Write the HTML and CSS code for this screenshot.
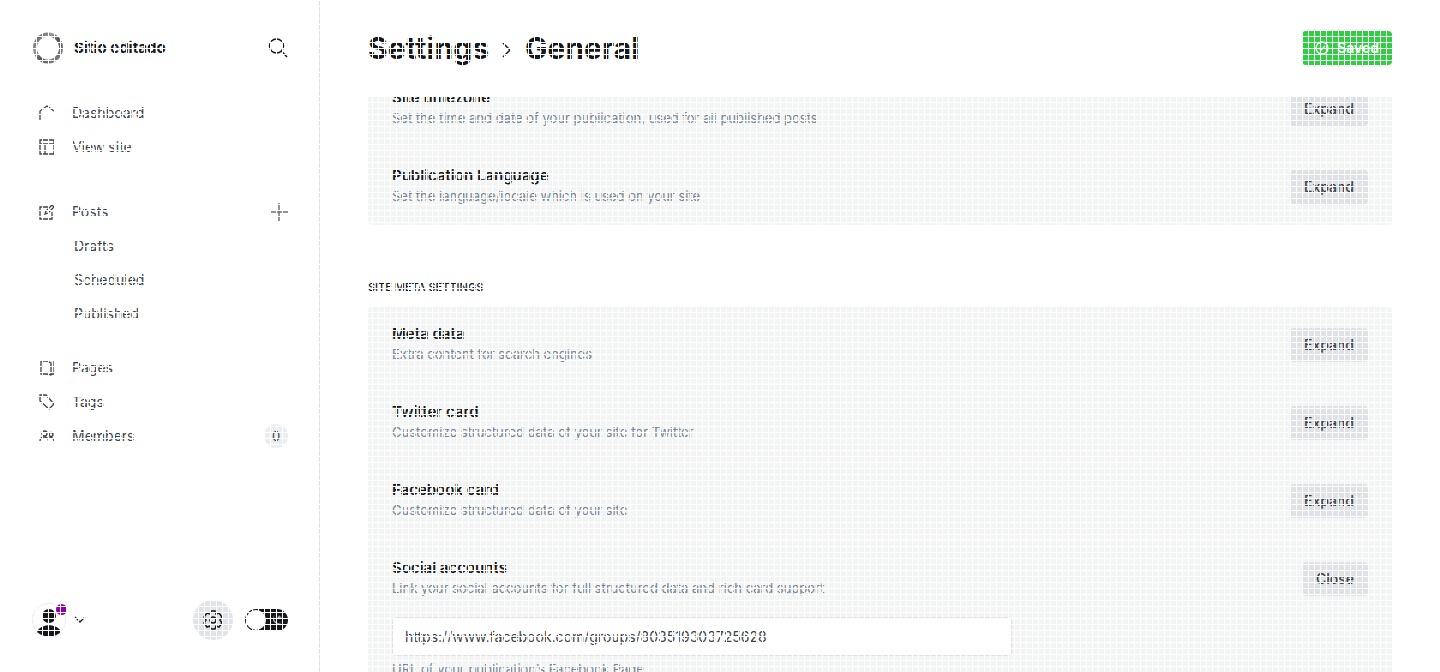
FILE: index.html
```html
<!DOCTYPE html>
<html lang="en">
<head>
<meta charset="utf-8">
<title>Settings - General</title>
<link rel="stylesheet" href="styles.css">
</head>
<body>
<div class="app">
  <nav class="sidebar" aria-label="Main">
    <header class="brand">
      <svg class="brand-logo" viewBox="0 0 32 32" aria-hidden="true"><defs><linearGradient id="ring" x1="0" y1="0" x2="1" y2="1"><stop offset="0" stop-color="#555"/><stop offset=".3" stop-color="#999"/><stop offset=".55" stop-color="#555"/><stop offset="1" stop-color="#888"/></linearGradient></defs><ellipse cx="16" cy="16" rx="13" ry="13.500" fill="none" stroke="url(#ring)" stroke-width="4"/></svg>
      <span class="brand-name">Sitio editado</span>
      <button class="icon-button" type="button" aria-label="Search"><svg class="search-icon" viewBox="0 0 20 20"><circle cx="8.500" cy="8" r="7"/><path d="M13.500 13l5.500 6"/></svg></button>
    </header>
    <ul class="nav-list">
      <li><a class="nav-item" href="#"><svg class="nav-icon" viewBox="0 0 16 16"><path d="M1 15V6l7-5 7 5"/></svg>Dashboard</a></li>
      <li><a class="nav-item" href="#"><svg class="nav-icon" viewBox="0 0 16 16"><path d="M1 1h14v14H1zM1 5h14M6 5v10"/></svg>View site</a></li>
    </ul>
    <ul class="nav-list nav-posts">
      <li class="nav-row"><a class="nav-item" href="#"><svg class="nav-icon" viewBox="0 0 16 16"><path d="M9 3H1v12h12V8M6 10l1-3 6-6 2 2-6 6z"/></svg>Posts</a><button class="icon-button" type="button" aria-label="New post"><svg class="plus-icon" viewBox="0 0 18 18"><path d="M9 0v18M0 9h18"/></svg></button></li>
      <li><a class="nav-item nav-sub" href="#">Drafts</a></li>
      <li><a class="nav-item nav-sub" href="#">Scheduled</a></li>
      <li><a class="nav-item nav-sub" href="#">Published</a></li>
    </ul>
    <ul class="nav-list nav-manage">
      <li><a class="nav-item" href="#"><svg class="nav-icon" viewBox="0 0 16 16"><path d="M2 1h6l4 2v12l-4-1H2zM15 1v13h-3"/></svg>Pages</a></li>
      <li><a class="nav-item" href="#"><svg class="nav-icon" viewBox="0 0 16 16"><path d="M1 1h6l8 9-5 5-9-8z"/></svg>Tags</a></li>
      <li class="nav-row"><a class="nav-item" href="#"><svg class="nav-icon" viewBox="0 0 16 16"><circle cx="5.500" cy="5.500" r="2.500"/><circle cx="12" cy="6.500" r="2"/><path d="M1 13c0-3 2-4 4.500-4s4 2 4 4M10 10c3-1 5 0 5 3"/></svg>Members</a><span class="count">0</span></li>
    </ul>
    <footer class="sidebar-footer">
      <button class="user-menu" type="button" aria-label="Account menu"><span class="avatar"><svg class="avatar-icon" viewBox="0 0 34 34"><circle cx="17" cy="17" r="16.500" fill="#fff" stroke="#e5e9ed"/><circle cx="17" cy="13" r="7"/><path d="M5 29c3-9 21-9 24 0-7 6-17 6-24 0z"/></svg><span class="notice"></span></span><svg class="chevron" viewBox="0 0 12 8"><path d="M1 1l5 5 5-5"/></svg></button>
      <a class="settings-link" href="#" aria-label="Settings"><svg class="gear-icon" viewBox="0 0 20 20"><path d="M8 1h4l1 3 3-1 3 4-2 3 2 3-3 4-3-1-1 3H8l-1-3-3 1-3-4 2-3-2-3 3-4 3 1z"/><circle cx="10" cy="10" r="3"/></svg></a>
      <label class="switch"><input class="switch-input" type="checkbox" aria-label="Night mode"><span class="switch-knob"></span><svg class="moon" viewBox="0 0 12 12"><path d="M4 1a5 5 0 1 0 7 7A5 5 0 0 1 4 1zM8 1l1 1.500 2 .5-2 1-1 1.500-1-1.500-1-1 1.500-.5z"/></svg></label>
    </footer>
  </nav>
  <main class="main">
    <header class="page-header">
      <h1 class="page-title"><a class="title-link" href="#">Settings</a><svg class="title-chevron" viewBox="0 0 10 16"><path d="M1 1l7 7-7 7"/></svg>General</h1>
      <button class="saved" type="button"><svg class="saved-icon" viewBox="0 0 14 14"><circle cx="7" cy="7" r="6"/><path d="M4 7l2 2 4-4"/></svg>Saved</button>
    </header>
    <div class="viewport">
      <section class="panel panel-scrolled" aria-label="Publication info">
        <div class="row"><div><h3 class="row-title">Site timezone</h3><p class="row-text">Set the time and date of your publication, used for all published posts</p></div><button class="button" type="button">Expand</button></div>
        <div class="row"><div><h3 class="row-title">Publication Language</h3><p class="row-text">Set the language/locale which is used on your site</p></div><button class="button" type="button">Expand</button></div>
      </section>
      <h2 class="section-title">Site meta settings</h2>
      <section class="panel">
        <div class="row"><div><h3 class="row-title">Meta data</h3><p class="row-text">Extra content for search engines</p></div><button class="button" type="button">Expand</button></div>
        <div class="row"><div><h3 class="row-title">Twitter card</h3><p class="row-text">Customize structured data of your site for Twitter</p></div><button class="button" type="button">Expand</button></div>
        <div class="row"><div><h3 class="row-title">Facebook card</h3><p class="row-text">Customize structured data of your site</p></div><button class="button" type="button">Expand</button></div>
        <div class="row"><div><h3 class="row-title">Social accounts</h3><p class="row-text">Link your social accounts for full structured data and rich card support</p></div><button class="button" type="button">Close</button></div>
        <div class="field"><input class="text-input" id="facebook" type="url" value="https://www.facebook.com/groups/803519303725628"><label class="field-label" for="facebook">URL of your publication’s Facebook Page</label></div>
      </section>
    </div>
  </main>
</div>
</body>
</html>
```
FILE: styles.css
```css
* { box-sizing: border-box; }
body { margin: 0; font-family: Inter, "Open Sans", sans-serif; font-size: 14px; line-height: 20px; color: #15171a; background: #fff; }
/* Fine white mesh drawn over the whole page */
body::after {
  content: ""; position: fixed; inset: 0; pointer-events: none;
  background:
    repeating-linear-gradient(to right, #fff 0 1px, transparent 1px 6px),
    repeating-linear-gradient(to bottom, #fff 0 1px, transparent 1px 6px);
}
h1, h2, h3, p, ul { margin: 0; padding: 0; }
a { color: inherit; text-decoration: none; }
button { font: inherit; color: inherit; border: 0; cursor: pointer; }
svg { display: block; flex: none; fill: none; stroke: currentColor; }
.app { display: flex; height: 100vh; overflow: hidden; }
.sidebar { flex: none; width: 320px; display: flex; flex-direction: column; padding: 32px 31px 32px 32px; border-right: 1px solid #dfe1e3; }
.brand { display: flex; align-items: center; height: 32px; margin-bottom: 32px; }
.brand-logo { width: 32px; height: 32px; }
.brand-name { flex: 1; margin-left: 10px; font-size: 15px; font-weight: 700; }
.icon-button { padding: 0; background: none; }
.search-icon { width: 20px; height: 20px; stroke-width: 1.500; }
.plus-icon { width: 18px; height: 18px; color: #6b7178; stroke-width: 1.500; }
.nav-list { list-style: none; color: #394047; }
.nav-posts { margin-top: 31px; }
.nav-manage { margin-top: 20px; }
.nav-row { display: flex; align-items: center; justify-content: space-between; }
.nav-item { display: flex; align-items: center; gap: 17px; height: 34px; padding-left: 7px; }
.nav-icon { width: 16px; height: 16px; stroke-width: 1.300; }
.nav-sub { padding-left: 42px; }
.count { width: 24px; height: 24px; border-radius: 50%; background: #ebeef0; font-size: 13px; line-height: 24px; text-align: center; }
.sidebar-footer { display: flex; align-items: center; gap: 12px; height: 40px; margin-top: auto; }
.user-menu { display: flex; align-items: center; gap: 8px; margin-right: auto; padding: 0; background: none; }
.avatar { position: relative; }
.avatar-icon { width: 34px; height: 34px; fill: #15171a; stroke: none; }
.notice { position: absolute; top: 1px; right: -1px; width: 11px; height: 11px; border-radius: 50%; background: #8e00a8; }
.chevron { width: 12px; height: 8px; stroke-width: 1.300; }
.settings-link { display: grid; place-items: center; width: 40px; height: 40px; border-radius: 50%; background: #e1e4e7; }
.gear-icon { width: 20px; height: 20px; stroke-width: 1.500; }
.switch { display: flex; align-items: center; justify-content: space-between; width: 43px; height: 22px; padding: 1px 5px 1px 1px; border-radius: 11px; background: #15171a; cursor: pointer; }
.switch-input { position: absolute; opacity: 0; }
.switch-knob { width: 20px; height: 20px; border-radius: 50%; background: #fff; }
.moon { width: 12px; height: 12px; fill: #b5b7b9; stroke: none; }
.main { flex: 1; min-width: 0; display: flex; flex-direction: column; padding: 0 48px; }
.page-header { flex: none; display: flex; align-items: center; justify-content: space-between; height: 97px; padding-bottom: 2px; }
.page-title { display: flex; align-items: center; gap: 13px; font-size: 30px; line-height: 36px; font-weight: 700; }
.title-chevron { width: 10px; height: 16px; margin-top: 4px; stroke-width: 1.500; }
.saved { display: flex; align-items: center; gap: 8px; height: 34px; padding: 0 13px; border-radius: 4px; background: #30cf43; color: #fff; font-weight: 600; }
.saved-icon { width: 14px; height: 14px; stroke-width: 1.300; }
.viewport { flex: 1; min-height: 0; overflow: hidden; }
.panel { border-radius: 4px; background: #f3f5f4; }
.panel-scrolled { margin-top: -26px; }
.row { display: flex; align-items: flex-start; justify-content: space-between; height: 76px; padding: 21px 24px 0; }
.row + .row { height: 78px; padding-top: 22px; border-top: 1px solid #fbf8f9; }
.row-title { margin-top: -4px; font-size: 15px; line-height: 20px; font-weight: 600; }
.row-text { font-size: 13px; line-height: 20px; color: #738393; }
.button { height: 34px; padding: 0 14px; border-radius: 4px; background: #dfe1e5; color: #394047; font-weight: 500; }
.section-title { margin: 53px 0 11px; font-size: 11px; line-height: 18px; font-weight: 500; text-transform: uppercase; }
.field { display: flex; flex-direction: column; width: 668px; max-width: 100%; padding: 0 24px 40px; }
.text-input { height: 39px; padding: 0 12px; border: 1px solid #dfe1e5; border-radius: 4px; background: #fff; font: inherit; font-size: 14px; color: #394047; }
.field-label { margin-top: 3px; font-size: 13px; line-height: 20px; color: #738393; }
```
